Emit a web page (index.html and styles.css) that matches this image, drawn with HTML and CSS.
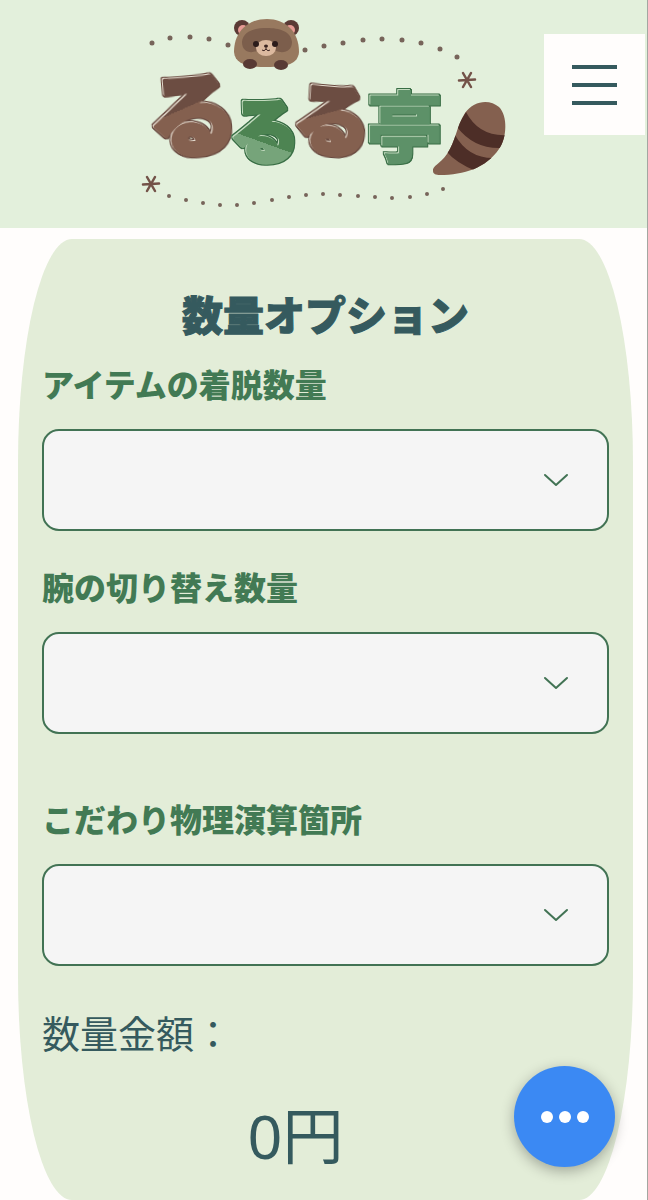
FILE: index.html
```html
<!DOCTYPE html>
<html lang="ja">
<head>
  <meta charset="UTF-8">
  <meta name="viewport" content="width=device-width, initial-scale=1.0">
  <title>るるる亭</title>
  <link rel="stylesheet" href="styles.css">
</head>
<body>
  <header class="header">
    <a class="logo" href="#">
      <svg viewBox="139 10 370 205" role="img" aria-label="るるる亭">
        <defs>
          <linearGradient id="brown" x1="0" y1="0" x2="0.25" y2="1">
            <stop offset="0.55" stop-color="#6c4d42"/>
            <stop offset="0.55" stop-color="#84604f"/>
          </linearGradient>
          <linearGradient id="green" x1="0" y1="0" x2="-0.25" y2="1">
            <stop offset="0.5" stop-color="#4d8452"/>
            <stop offset="0.5" stop-color="#76a47a"/>
          </linearGradient>
          <!-- light rim on the upper left, dark outline round it -->
          <filter id="rim-brown" x="-20%" y="-20%" width="140%" height="140%" color-interpolation-filters="sRGB">
            <feMorphology in="SourceAlpha" operator="dilate" radius="1" result="wide"/>
            <feOffset in="wide" dx="-1" dy="-1" result="upper"/>
            <feFlood flood-color="#68493f" result="dark"/>
            <feComposite in="dark" in2="wide" operator="in" result="edge"/>
            <feComposite in="dark" in2="upper" operator="in" result="edge-upper"/>
            <feOffset in="SourceAlpha" dx="-1" dy="-1" result="moved"/>
            <feFlood flood-color="#e6dccf"/>
            <feComposite in2="moved" operator="in" result="shine"/>
            <feMerge><feMergeNode in="edge-upper"/><feMergeNode in="edge"/><feMergeNode in="shine"/><feMergeNode in="SourceGraphic"/></feMerge>
          </filter>
          <filter id="rim-green" x="-20%" y="-20%" width="140%" height="140%" color-interpolation-filters="sRGB">
            <feMorphology in="SourceAlpha" operator="dilate" radius="1" result="wide"/>
            <feOffset in="wide" dx="-1" dy="-1" result="upper"/>
            <feFlood flood-color="#396e45" result="dark"/>
            <feComposite in="dark" in2="wide" operator="in" result="edge"/>
            <feComposite in="dark" in2="upper" operator="in" result="edge-upper"/>
            <feOffset in="SourceAlpha" dx="-1" dy="-1" result="moved"/>
            <feFlood flood-color="#c4dcc0"/>
            <feComposite in2="moved" operator="in" result="shine"/>
            <feMerge><feMergeNode in="edge-upper"/><feMergeNode in="edge"/><feMergeNode in="shine"/><feMergeNode in="SourceGraphic"/></feMerge>
          </filter>
          <g id="star" stroke="#735248" stroke-width="2.500" stroke-linecap="round">
            <path d="M-8 0.500L8-0.500M-4-7L4 7M4-7L-4 7"/>
          </g>
          <clipPath id="tail-shape">
            <path id="tail" d="M433 171C432 166 440 164 447 154C456 141 456 127 465 113C474 100 490 99 499 107C508 116 507 138 499 149C486 168 464 175 440 175C436 175 433 174 433 171Z"/>
          </clipPath>
        </defs>

        <!-- dotted lines -->
        <g fill="none" stroke="#77645a" stroke-width="5" stroke-linecap="round">
          <path d="M152 43h0M170 38h0M190 37h0M209 39h0M228 45h0"/>
          <path d="M305 50h0M324 46h0M343 43h0M363 40h0M382 39h0M402 40h0M421 43h0M440 49h0M457 57h0"/>
          <path stroke-width="4" d="M169 196h0M186 200h0M203 203h0M220 205h0M237 205h0M254 203h0M272 200h0M289 197h0M306 195h0M323 194h0M340 195h0M358 196h0M375 197h0M392 198h0M410 197h0M427 194h0M443 189h0"/>
        </g>
        <use href="#star" x="151" y="184"/>
        <use href="#star" x="467" y="80"/>

        <!-- raccoon -->
        <g>
          <circle cx="242" cy="28" r="8" fill="#5b3a35"/>
          <circle cx="291" cy="28" r="8" fill="#5b3a35"/>
          <circle cx="243" cy="30" r="5" fill="#e79a94"/>
          <circle cx="290" cy="30" r="5" fill="#e79a94"/>
          <path fill="#98795f" d="M234 52C234 31 249 19 267 19S299 31 299 52C298 64 287 67 267 67S235 64 234 52Z"/>
          <path fill="#7c5e4c" d="M242 42C243 31 255 28 267 28S291 31 292 42C292 51 284 54 276 51H257C249 54 242 51 242 42Z"/>
          <ellipse cx="266" cy="48" rx="10" ry="8" fill="#dcb99f"/>
          <circle cx="256" cy="44" r="3" fill="#2c1c1b"/>
          <circle cx="275" cy="44" r="3" fill="#2c1c1b"/>
          <ellipse cx="266" cy="46" rx="2" ry="1.500" fill="#3b2421"/>
          <path d="M266 46V49M262 50Q264 52 266 49Q268 52 270 50" fill="none" stroke="#3b2421"/>
          <ellipse cx="250" cy="64" rx="7" ry="5" fill="#583a34"/>
          <ellipse cx="281" cy="65" rx="7" ry="5" fill="#583a34"/>
        </g>

        <!-- shop name -->
        <g class="logo-text">
          <text class="logo-brown" x="193" y="149" font-size="90" transform="rotate(-4 193 112)">る</text>
          <text class="logo-green" x="265" y="158" font-size="70">る</text>
          <text class="logo-brown" x="333" y="150" font-size="78" transform="rotate(5 333 118)">る</text>
          <text class="logo-green logo-flat" x="405" y="156" font-size="76">亭</text>
        </g>

        <!-- tail -->
        <use href="#tail" fill="#84604f"/>
        <g clip-path="url(#tail-shape)" fill="#4d2e27">
          <path d="M466 112Q479 137 508 135L501 148Q474 149 457 127Z"/>
          <path d="M455 135Q468 158 493 158L476 171Q456 163 446 151Z"/>
        </g>
      </svg>
    </a>
    <button class="menu" type="button" aria-label="メニュー">
      <span></span>
      <span></span>
      <span></span>
    </button>
  </header>

  <main class="card">
    <h1>数量オプション</h1>

    <form>
      <div class="field">
        <label for="item">アイテムの着脱数量</label>
        <div class="select">
          <select id="item"><option value=""></option></select>
          <svg viewBox="0 0 26 14"><path d="M2 2L13 12L24 2"/></svg>
        </div>
      </div>

      <div class="field field-wide">
        <label for="arm">腕の切り替え数量</label>
        <div class="select">
          <select id="arm"><option value=""></option></select>
          <svg viewBox="0 0 26 14"><path d="M2 2L13 12L24 2"/></svg>
        </div>
      </div>

      <div class="field">
        <label for="physics">こだわり物理演算箇所</label>
        <div class="select">
          <select id="physics"><option value=""></option></select>
          <svg viewBox="0 0 26 14"><path d="M2 2L13 12L24 2"/></svg>
        </div>
      </div>
    </form>

    <p class="total-label">数量金額：</p>
    <p class="total">0円</p>
  </main>

  <button class="more" type="button" aria-label="その他">
    <span></span>
    <span></span>
    <span></span>
  </button>
</body>
</html>
```

FILE: styles.css
```css
* { box-sizing: border-box; }

body {
  margin: 0;
  border-right: 1px solid #a3a7a1;
  background: #fffdfc;
  color: #355a5e;
  font-family: "Noto Sans CJK JP", sans-serif;
}

.header {
  display: grid;
  grid-template-columns: 1fr 370px 1fr;
  align-items: start;
  height: 228px;
  background: #e3f0dc;
}
.logo {
  grid-column: 2;
  padding-top: 10px;
}
.logo svg { display: block; width: 100%; }
.logo-text {
  font-weight: 900;
  text-anchor: middle;
  stroke-width: 4px;
  stroke-linejoin: round;
}
.logo-brown { fill: url(#brown); stroke: url(#brown); filter: url(#rim-brown); }
.logo-green { fill: url(#green); stroke: url(#green); filter: url(#rim-green); }
.logo-flat { fill: #5d9168; stroke: #5d9168; stroke-width: 1px; }

.menu {
  display: flex;
  flex-direction: column;
  align-items: center;
  justify-content: center;
  gap: 14px;
  justify-self: end;
  width: 101px;
  height: 101px;
  margin: 34px 2px 0 0;
  padding: 0;
  border: 0;
  background: #fffdfc;
  cursor: pointer;
}
.menu span {
  width: 45px;
  height: 4px;
  background: #355a5e;
}

.card {
  margin: 11px 14px 0 18px;
  padding: 46px 24px 30px;
  border-radius: 54px / 224px;
  background: #e3edd8;
}
h1 {
  margin: 0 0 20px;
  font-size: 41px;
  font-weight: 900;
  line-height: 56px;
  text-align: center;
  -webkit-text-stroke: 1px;
}
.field { margin-bottom: 33px; }
.field-wide { margin-bottom: 62px; }
.field label {
  display: block;
  margin-bottom: 24px;
  color: #427a54;
  font-size: 32px;
  font-weight: 900;
  line-height: 44px;
}
.select { position: relative; }
.select select {
  display: block;
  width: 100%;
  height: 102px;
  padding: 0 80px 0 24px;
  border: 2px solid #427354;
  border-radius: 17px;
  appearance: none;
  background: #f5f5f5;
  color: #355a5e;
  font: inherit;
  font-size: 32px;
}
.select svg {
  position: absolute;
  top: 44px;
  right: 40px;
  width: 26px;
  fill: none;
  stroke: #427354;
  stroke-width: 2;
  stroke-linecap: round;
  stroke-linejoin: round;
  pointer-events: none;
}

.total-label {
  margin: 40px 0 44px;
  font-size: 38px;
  line-height: 52px;
}
.total {
  margin: 0 60px 0 0;
  font-family: "Noto Sans", "Noto Sans CJK JP", sans-serif;
  font-size: 61px;
  line-height: 68px;
  text-align: center;
}

.more {
  position: fixed;
  right: 33px;
  bottom: 33px;
  display: flex;
  align-items: center;
  justify-content: center;
  gap: 6px;
  width: 101px;
  height: 101px;
  padding: 0;
  border: 0;
  border-radius: 50%;
  background: #3b89f3;
  box-shadow: 0 4px 14px rgba(0, 0, 0, 0.3);
  cursor: pointer;
}
.more span {
  width: 12px;
  height: 12px;
  border-radius: 50%;
  background: #fff;
}
```
